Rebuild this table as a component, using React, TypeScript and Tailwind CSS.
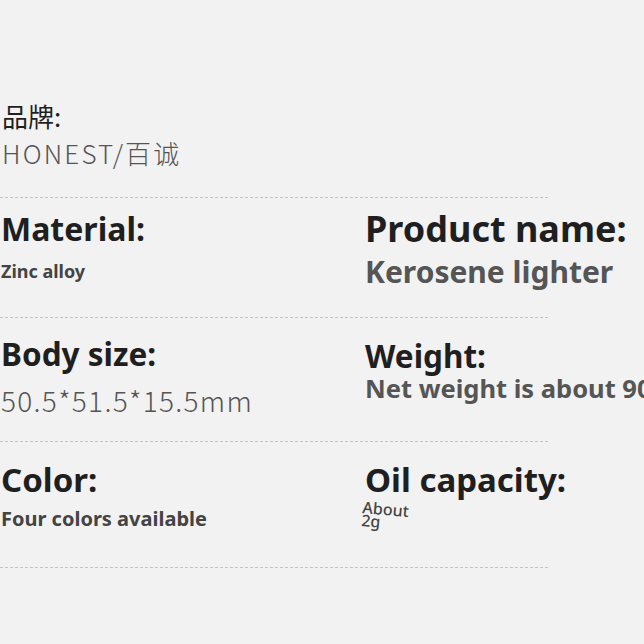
import React from 'react'

const sans = "font-['Noto_Sans','Noto_Sans_CJK_SC',sans-serif]"
const thin = "font-['Noto_Sans_CJK_SC','Noto_Sans',sans-serif]"

type Cell = { label: string; value: React.ReactNode; labelCls: string; valueCls: string }

function Field({ label, value, labelCls, valueCls }: Cell) {
  return (
    <div className="flex flex-col">
      <div className={`${sans} font-bold text-[#1f1f1f] ${labelCls}`}>{label}</div>
      <div className={valueCls}>{value}</div>
    </div>
  )
}

function Row({ h, pt, left, right }: { h: string; pt: string; left: Cell; right: Cell }) {
  return (
    <div className={`w-[548px] border-b border-dashed border-[#c4c4c4] ${h}`}>
      <div className={`grid grid-cols-[365px_1fr] ${pt} w-[644px]`}>
        <div className="pl-[1px]">
          <Field {...left} />
        </div>
        <div className="whitespace-nowrap">
          <Field {...right} />
        </div>
      </div>
    </div>
  )
}

export default function App() {
  return (
    <div className="w-[644px] h-[644px] overflow-hidden bg-[#f2f2f2]">
      {/* 品牌 */}
      <div className="w-[548px] h-[198px] border-b border-dashed border-[#c4c4c4] pt-[99px] pl-[2px]">
        <div className={`${thin} text-[26px] leading-[34px] font-normal text-[#1f1f1f]`}>品牌:</div>
        <div className={`${thin} text-[26px] leading-[40px] font-light text-[#555] tracking-[2.2px]`}>HONEST/百诚</div>
      </div>

      <Row
        h="h-[120px]"
        pt="pt-[11px]"
        left={{
          label: 'Material:',
          value: 'Zinc alloy',
          labelCls: 'text-[32px] leading-[40px]',
          valueCls: `${sans} font-bold text-[18px] leading-[24px] text-[#444] mt-[10px]`,
        }}
        right={{
          label: 'Product name:',
          value: 'Kerosene lighter',
          labelCls: 'text-[36px] leading-[40px]',
          valueCls: `${sans} font-bold text-[30px] leading-[36px] text-[#555] mt-[5px]`,
        }}
      />

      <Row
        h="h-[124px]"
        pt="pt-[18px]"
        left={{
          label: 'Body size:',
          value: '50.5*51.5*15.5mm',
          labelCls: 'text-[31.5px] leading-[36px]',
          valueCls: `${thin} font-light text-[28px] leading-[38px] text-[#555] tracking-[1.3px] mt-[9px]`,
        }}
        right={{
          label: 'Weight:',
          value: 'Net weight is about 90g',
          labelCls: 'text-[31.5px] leading-[36px] mt-[2px]',
          valueCls: `${sans} font-bold text-[25.5px] leading-[30px] text-[#555] -mt-[1px]`,
        }}
      />

      <Row
        h="h-[126px]"
        pt="pt-[18px]"
        left={{
          label: 'Color:',
          value: 'Four colors available',
          labelCls: 'text-[33px] leading-[40px]',
          valueCls: `${sans} font-bold text-[20px] leading-[26px] text-[#444] mt-[6px]`,
        }}
        right={{
          label: 'Oil capacity:',
          value: (
            <div className="origin-left rotate-[5deg] -ml-[3px] mt-[1px] text-[16px] leading-[13px] text-[#444] font-medium">
              About
              <br />
              2g
            </div>
          ),
          labelCls: 'text-[33px] leading-[40px]',
          valueCls: `${sans}`,
        }}
      />
    </div>
  )
}
